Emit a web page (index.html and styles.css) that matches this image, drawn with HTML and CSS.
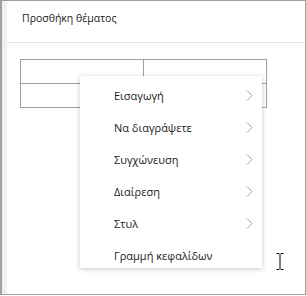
FILE: index.html
```html
<!DOCTYPE html>
<html lang="el">
<head>
    <meta charset="UTF-8">
    <title>Προσθήκη θέματος</title>
    <link rel="stylesheet" href="styles.css">
</head>
<body>
    <div class="panel">
        <div class="gutter"></div>
        <div class="content">
            <div class="header">Προσθήκη θέματος</div>
            <div class="editor">
                <table class="grid">
                    <tr><td></td><td></td></tr>
                    <tr><td></td><td></td></tr>
                </table>
            </div>
        </div>

        <ul class="menu">
            <li>Εισαγωγή <svg class="chev" width="7" height="11" viewBox="0 0 7 11"><polyline points="1,0.5 6,5.5 1,10.5"/></svg></li>
            <li>Να διαγράψετε <svg class="chev" width="7" height="11" viewBox="0 0 7 11"><polyline points="1,0.5 6,5.5 1,10.5"/></svg></li>
            <li>Συγχώνευση <svg class="chev" width="7" height="11" viewBox="0 0 7 11"><polyline points="1,0.5 6,5.5 1,10.5"/></svg></li>
            <li>Διαίρεση <svg class="chev" width="7" height="11" viewBox="0 0 7 11"><polyline points="1,0.5 6,5.5 1,10.5"/></svg></li>
            <li>Στυλ <svg class="chev" width="7" height="11" viewBox="0 0 7 11"><polyline points="1,0.5 6,5.5 1,10.5"/></svg></li>
            <li>Γραμμή κεφαλίδων</li>
        </ul>

        <svg class="ibeam" width="8" height="17" viewBox="0 0 8 17">
            <path d="M0.5 0.5h2.5l1 1l1-1h2.5M4 1.5v14M0.5 16.5h2.5l1-1l1 1h2.5" />
        </svg>
    </div>
</body>
</html>
```

FILE: styles.css
```css
body {
    margin: 0;
    background: #fff;
    font-family: "Open Sans", "Noto Sans", sans-serif;
    color: #1a1a1a;
}
.panel {
    position: relative;
    display: flex;
    width: 306px;
    height: 295px;
    box-sizing: border-box;
    border: 1px solid #a0a0a0;
    border-left: 2px solid #a0a0a0;
    background: #fff;
}
.gutter {
    width: 5px;
    background: #f0f0f0;
}
.content {
    flex: 1;
    display: flex;
    flex-direction: column;
}
.header {
    height: 42px;
    box-sizing: border-box;
    padding: 10px 0 0 15px;
    font-size: 10.5px;
    border-bottom: 1px solid #e3e3e3;
}
.editor {
    padding: 16px 0 0 13px;
}
.grid {
    border-collapse: collapse;
    width: 247px;
}
.grid td {
    border: 1px solid #a0a0a0;
    height: 23px;
    padding: 0;
    width: 50%;
}
.menu {
    position: absolute;
    left: 78px;
    top: 75px;
    width: 182px;
    height: 192px;
    margin: 0;
    padding: 3px 0 0;
    box-sizing: border-box;
    list-style: none;
    background: #fff;
    box-shadow: 0 1px 5px rgba(0, 0, 0, 0.22);
    overflow: hidden;
}
.menu li {
    display: flex;
    align-items: center;
    justify-content: space-between;
    height: 32px;
    padding: 0 9px 0 34px;
    font-size: 11px;
    color: #1a1a1a;
}
.chev {
    fill: none;
    stroke: #a0a0a0;
    stroke-width: 1;
}
.ibeam {
    position: absolute;
    left: 274px;
    top: 252px;
    fill: none;
    stroke: #000;
    stroke-width: 1;
}
```
